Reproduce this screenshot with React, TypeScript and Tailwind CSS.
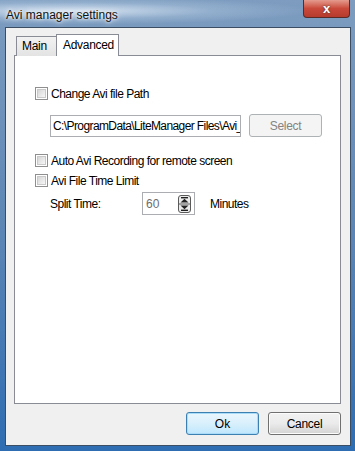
import React from 'react';

const Checkbox: React.FC = () => (
  <div className="w-[13px] h-[13px] border border-[#8f8f8f] bg-white p-[1px] shrink-0">
    <div className="w-full h-full border border-[#c9c9c9] bg-gradient-to-br from-[#d6d6d6] to-[#f7f7f7]" />
  </div>
);

const CheckRow: React.FC<{ label: string }> = ({ label }) => (
  <div className="flex items-center h-[15px]">
    <Checkbox />
    <span className="ml-[3px] text-[12px] tracking-[-0.5px] text-black leading-none">{label}</span>
  </div>
);

const SpinArrows: React.FC = () => (
  <svg width="13" height="18" viewBox="0 0 13 18" className="shrink-0">
    <rect x="0.5" y="0.5" width="12" height="17" rx="2.5" fill="#ececec" stroke="#5a5a5a" />
    <line x1="1" y1="9" x2="12" y2="9" stroke="#5a5a5a" />
    <rect x="3" y="2" width="7" height="1.4" fill="#222" />
    <path d="M2.5 7.6 L6.5 3.8 L10.5 7.6 Z" fill="#222" />
    <path d="M2.5 10.4 L6.5 14.2 L10.5 10.4 Z" fill="#222" />
    <rect x="3" y="14.6" width="7" height="1.4" fill="#222" />
  </svg>
);

const App: React.FC = () => {
  return (
    <div
      className="w-[355px] h-[451px] flex flex-col bg-gradient-to-b from-[#7d9cbf] via-[#5d86b5] to-[#2e6db2] overflow-hidden"
      style={{ fontFamily: '"Liberation Sans", Arial, sans-serif' }}
    >
      {/* title bar */}
      <div className="h-[27px] flex items-start justify-between pl-[6px] pr-[5px] bg-[radial-gradient(ellipse_at_20%_40%,rgba(230,240,250,0.85),rgba(200,220,240,0.3)_35%,transparent_60%)]">
        <span className="mt-[6px] text-[12px] text-[#111] [text-shadow:0_0_6px_#fff,0_0_3px_#fff]">
          Avi manager settings
        </span>
        <div className="w-[47px] h-[18px] rounded-b-[4px] border border-t-0 border-[#5a2a26] bg-gradient-to-b from-[#e49a8e] via-[#c9493a] to-[#b63b2e] flex items-center justify-center">
          <span className="text-white font-bold text-[13px] leading-none [text-shadow:0_0_2px_#333]">x</span>
        </div>
      </div>

      {/* client area */}
      <div className="flex-1 ml-[5px] mr-[4px] mb-[5px] border border-[#3a4d63] bg-[#f0f0f0] flex flex-col">
        <div className="pt-[6px] pl-[8px] pr-[9px] flex flex-col">
          {/* tabs */}
          <div className="flex items-end pl-[2px] h-[22px] -mb-[1px] relative z-10">
            <div className="h-[20px] w-[41px] border border-[#898c95] border-b-0 bg-gradient-to-b from-[#f2f2f2] to-[#e3e3e3] text-[12px] tracking-[-0.3px] text-black pl-[5px] pt-[3px] leading-none">
              Main
            </div>
            <div className="h-[22px] w-[63px] -ml-[1px] border border-[#898c95] border-b-0 bg-white text-[12px] tracking-[-0.3px] text-black pl-[6px] pt-[4px] leading-none">
              Advanced
            </div>
          </div>

          {/* panel */}
          <div className="h-[349px] border border-[#898c95] bg-white pl-[20px] pt-[30px]">
            <CheckRow label="Change Avi file Path" />

            <div className="flex items-center mt-[13px] pl-[15px]">
              <div className="w-[191px] h-[22px] border border-[#abadb3] bg-white flex items-center pl-[2px] overflow-hidden">
                <span className="text-[12px] tracking-[-0.6px] text-black whitespace-nowrap leading-none">
                  C:\ProgramData\LiteManager Files\Avi_
                </span>
              </div>
              <div className="ml-[8px] w-[73px] h-[23px] rounded-[3px] border border-[#adb2b5] bg-[#f4f4f4] flex items-center justify-center text-[12px] tracking-[-0.3px] text-[#838383] leading-none">
                Select
              </div>
            </div>

            <div className="mt-[16px]">
              <CheckRow label="Auto Avi Recording for remote screen" />
            </div>
            <div className="mt-[5px]">
              <CheckRow label="Avi File Time Limit" />
            </div>

            <div className="flex items-center mt-[4px] pl-[15px]">
              <span className="w-[92px] text-[12px] tracking-[-0.5px] text-black leading-none">Split Time:</span>
              <div className="w-[53px] h-[23px] border border-[#abadb3] bg-white flex items-center justify-between pl-[3px] pr-[3px]">
                <span className="text-[12px] text-[#6d6d6d] leading-none">60</span>
                <SpinArrows />
              </div>
              <span className="ml-[15px] text-[12px] tracking-[-0.5px] text-black leading-none">Minutes</span>
            </div>
          </div>

          {/* buttons */}
          <div className="flex justify-end gap-[9px] mt-[8px]">
            <div className="w-[73px] h-[23px] rounded-[3px] border border-[#3c7fb1] bg-gradient-to-b from-[#eaf6fd] via-[#d9f0fc] to-[#bee6fd] shadow-[inset_0_0_0_1px_#a8dcf8] flex items-center justify-center text-[12px] text-black leading-none">
              Ok
            </div>
            <div className="w-[73px] h-[23px] rounded-[3px] border border-[#707070] bg-gradient-to-b from-[#f2f2f2] via-[#ebebeb] to-[#d3d3d3] shadow-[inset_0_0_0_1px_#fcfcfc] flex items-center justify-center text-[12px] tracking-[-0.3px] text-black leading-none">
              Cancel
            </div>
          </div>
        </div>
      </div>
    </div>
  );
};

export default App;
